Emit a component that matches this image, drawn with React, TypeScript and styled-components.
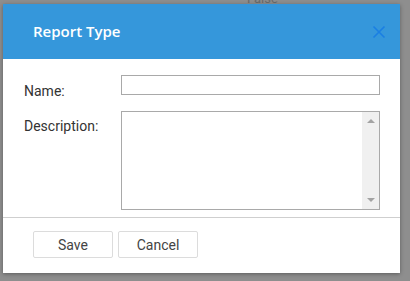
import styled, { createGlobalStyle } from 'styled-components'

const GlobalStyle = createGlobalStyle`
  html, body {
    margin: 0;
    padding: 0;
    background: #8e8e8e;
    overflow: hidden;
  }
`

const Backdrop = styled.div`
  position: relative;
  width: 410px;
  height: 281px;
  padding: 4px 0 0 3px;
  box-sizing: border-box;
  background: #8e8e8e;
  font-family: Roboto, "Liberation Sans", sans-serif;
`

// text of the page under the overlay, mostly hidden by the dialog
const BehindText = styled.div`
  position: absolute;
  top: -9px;
  left: 247px;
  font-size: 13px;
  color: #6a6a6a;
`

const Dialog = styled.div`
  position: relative;
  width: 397px;
  height: 269px;
  background: #fff;
  display: flex;
  flex-direction: column;
  box-shadow: 0 1px 4px rgba(0, 0, 0, 0.35);
`

const Header = styled.div`
  height: 55px;
  flex: none;
  background: #3597db;
  display: flex;
  align-items: center;
  justify-content: space-between;
  padding: 0 14px 0 30px;
`

const Title = styled.h1`
  margin: 0;
  font-family: "Open Sans", "Noto Sans", sans-serif;
  font-weight: 600;
  font-size: 15px;
  color: #fff;
  padding-bottom: 2px;
`

const CloseButton = styled.button`
  border: none;
  background: none;
  padding: 0;
  width: 14px;
  height: 14px;
  display: flex;
  cursor: pointer;
`

const Form = styled.div`
  flex: 1;
  padding: 16px 20px 0 21px;
  display: flex;
  flex-direction: column;
  gap: 16px;
`

const Row = styled.div`
  display: flex;
  align-items: flex-start;
`

const Label = styled.label<{ $offset: number }>`
  width: 97px;
  flex: none;
  padding-top: ${p => p.$offset}px;
  margin-bottom: -10px;
  font-size: 14px;
  line-height: 16px;
  color: #333;
`

const TextInput = styled.input`
  flex: 1;
  height: 20px;
  box-sizing: border-box;
  border: 1px solid #a9a9a9;
  margin: 0;
  padding: 2px 4px;
  outline: none;
`

const AreaBox = styled.div`
  flex: 1;
  height: 99px;
  box-sizing: border-box;
  border: 1px solid #a9a9a9;
  display: flex;
`

const TextArea = styled.textarea`
  flex: 1;
  border: none;
  margin: 0;
  padding: 2px 4px;
  resize: none;
  outline: none;
  overflow: hidden;
`

const ScrollTrack = styled.div`
  width: 17px;
  flex: none;
  background: #f0f0f0;
  display: flex;
  flex-direction: column;
  justify-content: space-between;
  align-items: center;
  padding: 7px 0 7px;
  box-sizing: border-box;
`

const Arrow = styled.span<{ $down?: boolean }>`
  width: 0;
  height: 0;
  border-left: 4px solid transparent;
  border-right: 4px solid transparent;
  ${p => (p.$down ? 'border-top: 4px solid #a3a3a3;' : 'border-bottom: 4px solid #a3a3a3;')}
`

const Footer = styled.div`
  flex: none;
  border-top: 1px solid #cfcfcf;
  padding: 13px 30px 15px;
  display: flex;
  gap: 5px;
`

const Button = styled.button`
  width: 80px;
  height: 27px;
  box-sizing: border-box;
  border: 1px solid #dcdcdc;
  border-radius: 2px;
  background: #fff;
  font-family: Roboto, "Liberation Sans", sans-serif;
  font-size: 14px;
  color: #444;
  padding: 0;
`

export default function App() {
  return (
    <>
      <GlobalStyle />
      <Backdrop>
        <BehindText>False</BehindText>
        <Dialog>
          <Header>
            <Title>Report Type</Title>
            <CloseButton aria-label="Close">
              <svg width="14" height="14" viewBox="0 0 14 14">
                <path d="M1.5 1.5 L12.5 12.5 M12.5 1.5 L1.5 12.5" stroke="#1a7fe3" strokeWidth="1.6" fill="none" />
              </svg>
            </CloseButton>
          </Header>
          <Form>
            <Row>
              <Label $offset={8}>Name:</Label>
              <TextInput type="text" />
            </Row>
            <Row>
              <Label $offset={7}>Description:</Label>
              <AreaBox>
                <TextArea />
                <ScrollTrack>
                  <Arrow />
                  <Arrow $down />
                </ScrollTrack>
              </AreaBox>
            </Row>
          </Form>
          <Footer>
            <Button>Save</Button>
            <Button>Cancel</Button>
          </Footer>
        </Dialog>
      </Backdrop>
    </>
  )
}
